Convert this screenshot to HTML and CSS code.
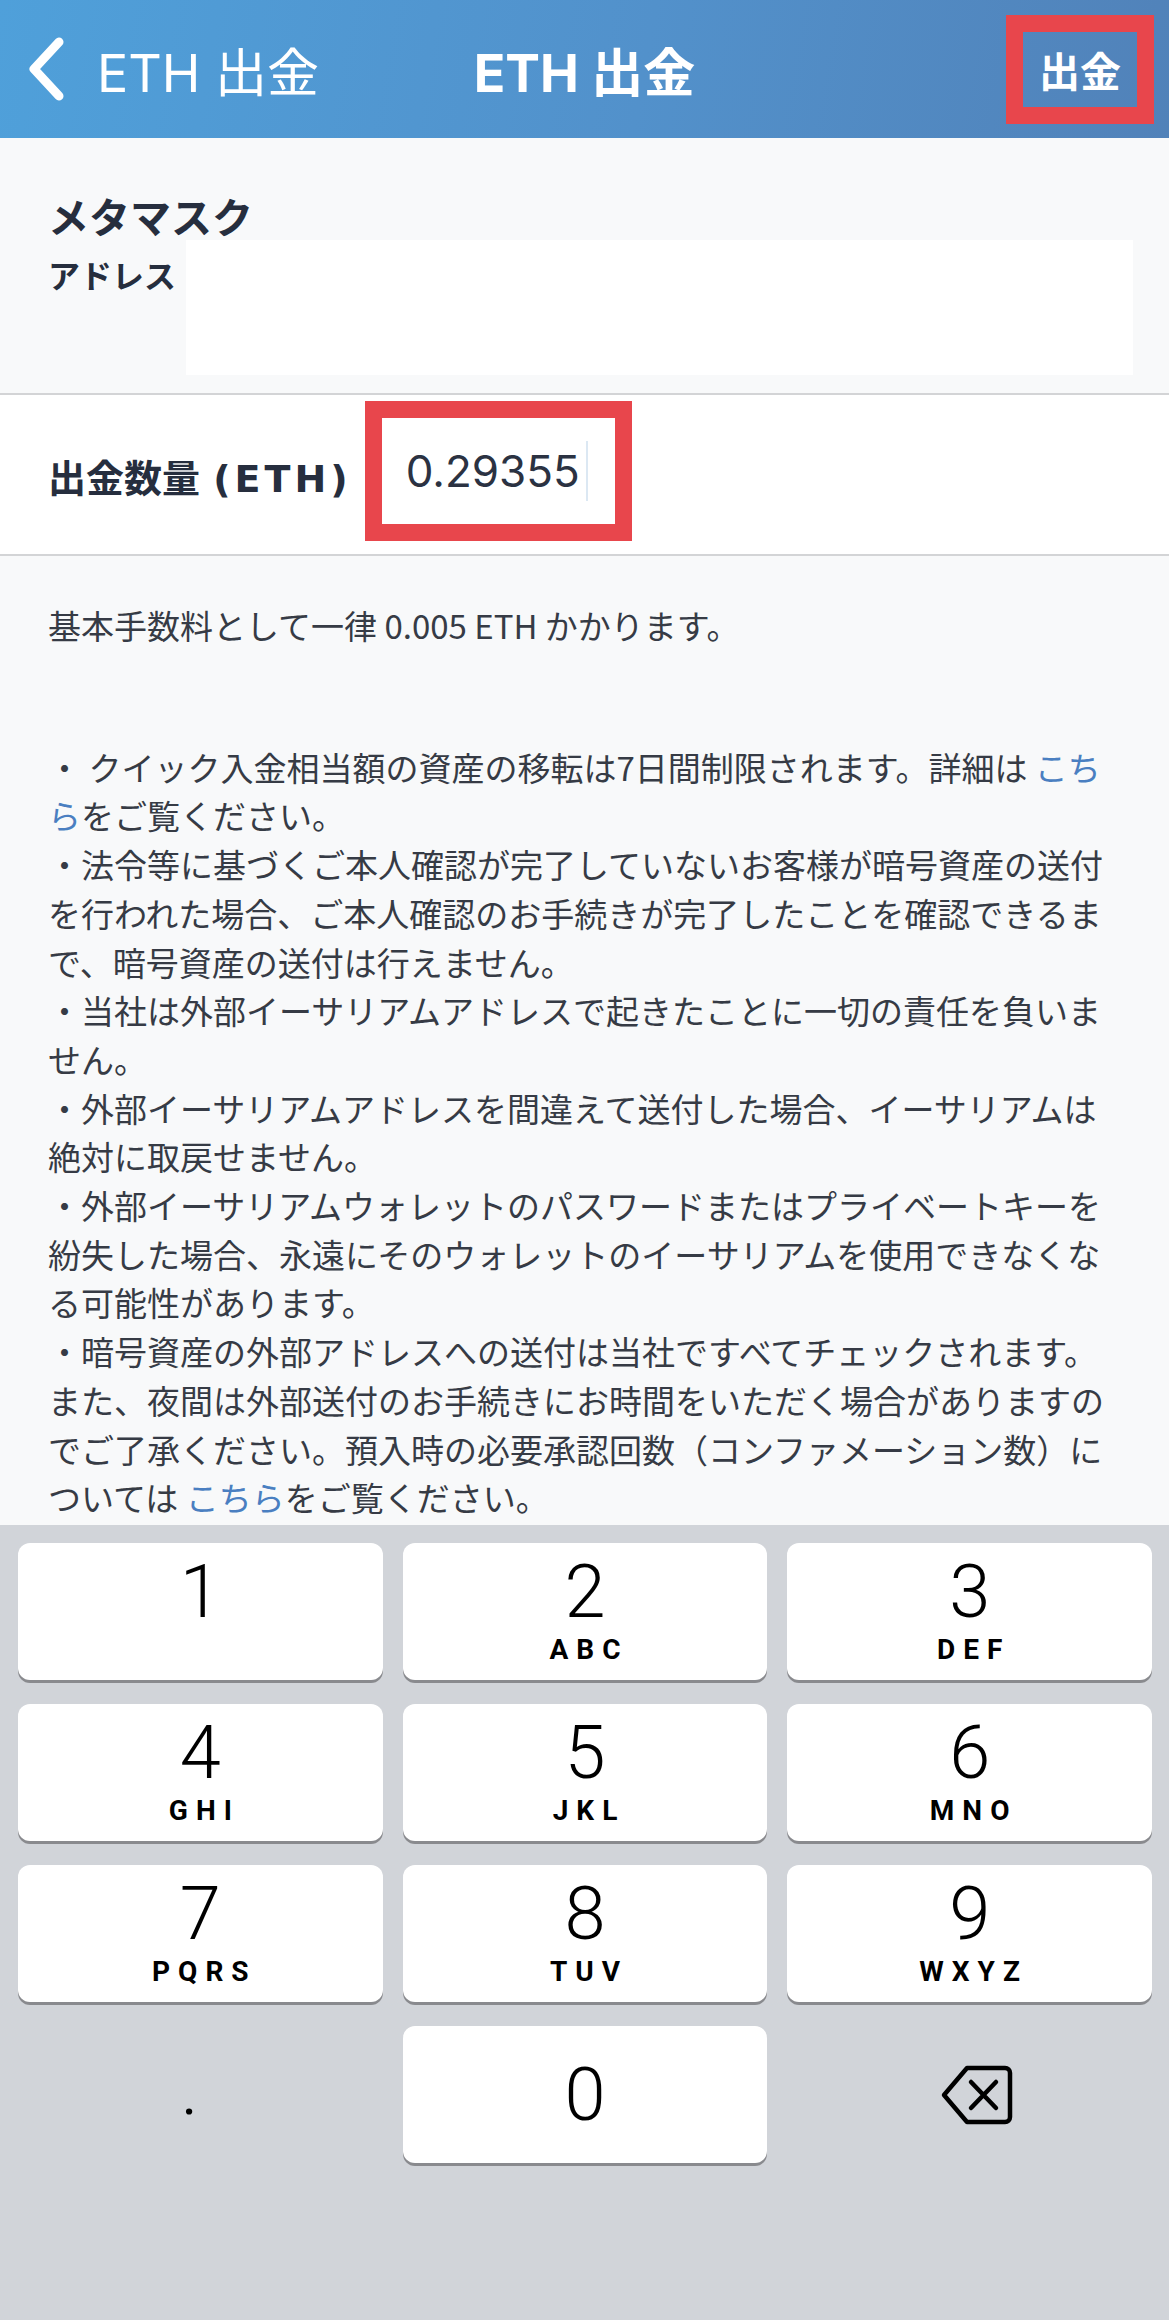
FILE: index.html
```html
<!DOCTYPE html>
<html lang="ja">
<head>
  <meta charset="UTF-8">
  <meta name="viewport" content="width=device-width, initial-scale=1.0">
  <title>ETH 出金</title>
  <link rel="stylesheet" href="styles.css">
</head>
<body>
<div class="screen">
  <header class="navbar">
    <a class="nav-back" href="#">
      <svg class="chevron" viewBox="0 0 40 66" width="40" height="66"><path d="M33 6 L8 33 L33 60"/></svg>
      <span>ETH 出金</span>
    </a>
    <h1 class="nav-title">ETH 出金</h1>
    <div class="nav-right">
      <button class="nav-action highlight" type="button">出金</button>
    </div>
  </header>

  <section class="address-card">
    <h2 class="wallet-name">メタマスク</h2>
    <div class="address-row">
      <span class="address-label">アドレス</span>
      <div class="address-box"></div>
    </div>
  </section>

  <section class="amount-row">
    <label class="amount-label">出金数量 <span class="unit">(ETH)</span></label>
    <div class="amount-input highlight">0.29355<span class="caret"></span></div>
  </section>

  <section class="notes">
    <p class="fee">基本手数料として一律 0.005 ETH かかります。</p>
    <p>・ クイック入金相当額の資産の移転は7日間制限されます。詳細は <a href="#">こちら</a>をご覧ください。</p>
    <p>・法令等に基づくご本人確認が完了していないお客様が暗号資産の送付を行われた場合、ご本人確認のお手続きが完了したことを確認できるまで、暗号資産の送付は行えません。</p>
    <p>・当社は外部イーサリアムアドレスで起きたことに一切の責任を負いません。</p>
    <p>・外部イーサリアムアドレスを間違えて送付した場合、イーサリアムは絶対に取戻せません。</p>
    <p>・外部イーサリアムウォレットのパスワードまたはプライベートキーを紛失した場合、永遠にそのウォレットのイーサリアムを使用できなくなる可能性があります。</p>
    <p>・暗号資産の外部アドレスへの送付は当社ですべてチェックされます。また、夜間は外部送付のお手続きにお時間をいただく場合がありますのでご了承ください。預入時の必要承認回数（コンファメーション数）については <a href="#">こちら</a>をご覧ください。</p>
  </section>

  <div class="keypad">
    <div class="key"><span class="key-digit">1</span><span class="key-letters"></span></div>
    <div class="key"><span class="key-digit">2</span><span class="key-letters">ABC</span></div>
    <div class="key"><span class="key-digit">3</span><span class="key-letters">DEF</span></div>
    <div class="key"><span class="key-digit">4</span><span class="key-letters">GHI</span></div>
    <div class="key"><span class="key-digit">5</span><span class="key-letters">JKL</span></div>
    <div class="key"><span class="key-digit">6</span><span class="key-letters">MNO</span></div>
    <div class="key"><span class="key-digit">7</span><span class="key-letters">PQRS</span></div>
    <div class="key"><span class="key-digit">8</span><span class="key-letters">TUV</span></div>
    <div class="key"><span class="key-digit">9</span><span class="key-letters">WXYZ</span></div>
    <div class="key key-blank key-dot">.</div>
    <div class="key key-zero"><span class="key-digit">0</span></div>
    <div class="key key-blank key-delete">
      <svg viewBox="0 0 74 62" width="74" height="62">
        <path d="M4 31 L27 4 H65 A5 5 0 0 1 70 9 V53 A5 5 0 0 1 65 58 H27 Z"/>
        <path d="M31 18 L56 44 M56 18 L31 44"/>
      </svg>
    </div>
  </div>
</div>
</body>
</html>
```

FILE: styles.css
```css
* { box-sizing: border-box; }
html, body { margin: 0; }
body {
  font-family: "Noto Sans CJK JP", sans-serif;
  background: #f8f9fa;
  color: #2b3242;
}
.screen {
  height: 2320px;
  display: flex;
  flex-direction: column;
  overflow: hidden;
}

/* nav bar */
.navbar {
  flex: none;
  height: 138px;
  display: grid;
  grid-template-columns: 1fr auto 1fr;
  align-items: center;
  background: linear-gradient(100deg, #4fa0da 0%, #5291cb 55%, #5182b9 100%);
  color: #fff;
}
.nav-back {
  display: flex;
  align-items: center;
  padding-left: 26px;
  color: #fff;
  text-decoration: none;
  font-family: Inter, "Noto Sans CJK JP", sans-serif;
  font-size: 52px;
}
.chevron {
  fill: none;
  stroke: #fff;
  stroke-width: 9;
  stroke-linecap: round;
  stroke-linejoin: round;
  margin-right: 31px;
}
.nav-title {
  margin: 0;
  font-family: Inter, "Noto Sans CJK JP", sans-serif;
  font-size: 52px;
  font-weight: 700;
}
.nav-right { justify-self: end; padding-right: 15px; }
.highlight { border: 17px solid #e8464c; }
.nav-action {
  width: 148px;
  height: 109px;
  padding: 0;
  background: none;
  color: #fff;
  font: 700 41px "Noto Sans CJK JP", sans-serif;
}

/* address */
.address-card {
  padding: 53px 36px 18px 48px;
  background: #f8f9fa;
  border-bottom: 2px solid #d3d4d6;
}
.wallet-name {
  margin: 0;
  font-size: 41px;
  line-height: 49px;
  font-weight: 700;
  color: #262e3e;
}
.address-row { display: flex; align-items: flex-start; }
.address-label {
  width: 138px;
  margin-top: 14px;
  font-size: 32px;
  line-height: 40px;
  font-weight: 700;
  color: #262e3e;
}
.address-box { flex: 1; height: 135px; background: #fff; }

/* amount */
.amount-row {
  flex: none;
  height: 161px;
  display: flex;
  align-items: center;
  padding: 6px 0 13px 48px;
  background: #fff;
  border-bottom: 2px solid #d3d4d6;
}
.amount-label {
  margin: 9px 13px 0 0;
  font-family: "DejaVu Sans", "Noto Sans CJK JP", sans-serif;
  font-size: 38px;
  font-weight: 700;
  color: #262e3e;
}
.amount-label .unit { letter-spacing: 4px; }
.amount-input {
  width: 267px;
  height: 140px;
  display: flex;
  align-items: center;
  padding-left: 24px;
  background: #fff;
  font: 400 44px Inter, sans-serif;
  color: #2b3242;
}
.caret { width: 2px; height: 60px; margin-left: 6px; background: #dce8f3; }

/* notes */
.notes {
  flex: 1;
  overflow: hidden;
  padding: 45px 46px 0 48px;
  background: #f8f9fa;
  font-size: 33px;
  line-height: 48.7px;
  color: #363b45;
}
.notes p { margin: 0; }
.notes .fee { margin-bottom: 93px; }
.notes a { color: #4a7fc1; text-decoration: none; }

/* keypad */
.keypad {
  flex: none;
  height: 795px;
  display: grid;
  grid-template-columns: repeat(3, 1fr);
  grid-auto-rows: 137px;
  gap: 24px 20px;
  align-content: start;
  padding: 18px 17px 0 18px;
  background: #d1d4d9;
}
.key {
  display: flex;
  flex-direction: column;
  align-items: center;
  padding-top: 12px;
  background: #fff;
  border-radius: 12px;
  box-shadow: 0 3px 0 #898a8e;
  font-family: Roboto, "Liberation Sans", sans-serif;
  color: #000;
}
.key-digit { font-size: 74px; line-height: 74px; font-weight: 300; }
.key-letters {
  height: 28px;
  margin-top: 7px;
  padding-left: 8px;
  font-size: 28px;
  line-height: 28px;
  font-weight: 700;
  letter-spacing: 8px;
}
.key-zero { justify-content: center; padding-top: 0; }
.key-blank {
  justify-content: center;
  padding-top: 0;
  background: none;
  box-shadow: none;
}
.key-dot { font-size: 56px; line-height: 56px; padding-right: 22px; }
.key-delete { padding-left: 14px; }
.key-delete svg {
  fill: none;
  stroke: #000;
  stroke-width: 4.5;
  stroke-linejoin: round;
  stroke-linecap: round;
}
```
